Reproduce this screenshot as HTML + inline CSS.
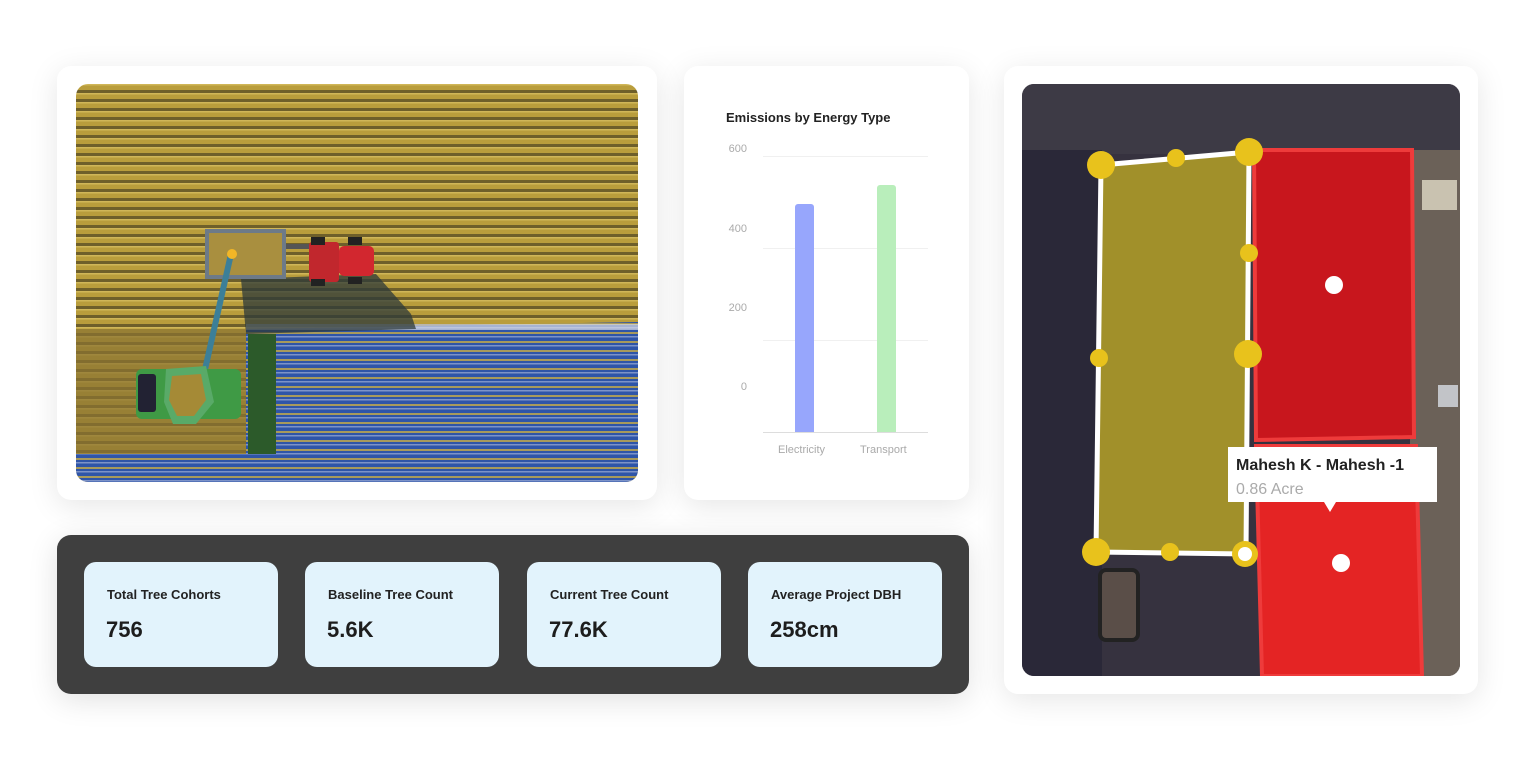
<!DOCTYPE html>
<html><head><meta charset="utf-8"><style>
html,body{margin:0;padding:0;background:#fff;width:1536px;height:766px;overflow:hidden;font-family:"Liberation Sans",sans-serif}
.card{position:absolute;background:#fff;border-radius:14px;box-shadow:0 6px 30px rgba(0,0,0,0.10)}
.stat{position:absolute;top:27px;width:194px;height:105px;background:#e2f3fc;border-radius:12px}
.stat .l{position:absolute;left:23px;top:25px;font-size:13px;font-weight:bold;color:#222}
.stat .v{position:absolute;left:22px;top:55px;font-size:22px;font-weight:bold;color:#1d1d1d}
.yl{position:absolute;font-size:11px;color:#aaa;width:40px;text-align:right;left:23px}
</style></head><body>

<div class="card" style="left:57px;top:66px;width:600px;height:434px"></div>
<svg style="position:absolute;left:76px;top:84px" width="562" height="398" viewBox="0 0 562 398">
<defs>
<clipPath id="c1"><rect width="562" height="398" rx="12"/></clipPath>
<pattern id="gold" width="562" height="9" patternUnits="userSpaceOnUse">
<rect width="562" height="9" fill="#b99d3c"/><rect y="6" width="562" height="3" fill="#6e5f2a"/><rect y="0" width="562" height="1.5" fill="#d0b658"/></pattern>
<pattern id="blue" width="562" height="9" patternUnits="userSpaceOnUse">
<rect width="562" height="9" fill="#2f55a8"/><rect y="5" width="562" height="2" fill="#a89a5c"/><rect y="0" width="562" height="1.5" fill="#7d93c8"/></pattern>
</defs>
<g clip-path="url(#c1)">
<rect width="562" height="398" fill="url(#gold)"/>
<polygon points="170,245 562,238 562,398 0,398 0,370 170,370" fill="url(#blue)"/>
<rect x="170" y="240" width="392" height="6" fill="#d8dce6" opacity="0.7"/>
<polygon points="165,195 300,190 335,230 340,245 170,250" fill="#2e3a3a" opacity="0.75"/>
<rect x="0" y="245" width="170" height="125" fill="#8a7332" opacity="0.7"/>
<rect x="129" y="145" width="81" height="50" fill="#6d7a88"/>
<rect x="133" y="149" width="73" height="42" fill="#a98f3f"/>
<rect x="210" y="160" width="24" height="5" fill="#555"/>
<rect x="233" y="158" width="30" height="40" fill="#c1272d" rx="3"/>
<rect x="263" y="162" width="35" height="30" fill="#d2272f" rx="5"/>
<rect x="235" y="153" width="14" height="8" fill="#222"/><rect x="272" y="153" width="14" height="8" fill="#222"/>
<rect x="235" y="195" width="14" height="7" fill="#222"/><rect x="272" y="193" width="14" height="7" fill="#222"/>
<line x1="128" y1="290" x2="155" y2="170" stroke="#3c7f98" stroke-width="6"/>
<circle cx="156" cy="170" r="5" fill="#f2b626"/>
<rect x="172" y="250" width="28" height="120" fill="#2c5a2a"/>
<rect x="60" y="285" width="105" height="50" fill="#3f9a45" rx="6"/>
<polygon points="90,285 130,282 138,318 120,340 97,340 88,318" fill="#59aa68"/>
<polygon points="96,292 125,290 130,316 118,332 101,332 93,316" fill="#a58a36"/>
<rect x="62" y="290" width="18" height="38" fill="#223" rx="3"/>
</g></svg>

<div class="card" style="left:684px;top:66px;width:285px;height:434px">
<div style="position:absolute;left:42px;top:44px;font-size:13px;font-weight:bold;color:#222">Emissions by Energy Type</div>
<div class="yl" style="top:77px">600</div>
<div class="yl" style="top:157px">400</div>
<div class="yl" style="top:236px">200</div>
<div class="yl" style="top:315px">0</div>
<div style="position:absolute;left:79px;top:90px;width:165px;height:1px;background:#f0f0f0"></div>
<div style="position:absolute;left:79px;top:182px;width:165px;height:1px;background:#f0f0f0"></div>
<div style="position:absolute;left:79px;top:274px;width:165px;height:1px;background:#f0f0f0"></div>
<div style="position:absolute;left:79px;top:366px;width:165px;height:1px;background:#ddd"></div>
<div style="position:absolute;left:111px;top:138px;width:19px;height:228px;background:#97a6fc;border-radius:3px 3px 0 0"></div>
<div style="position:absolute;left:193px;top:119px;width:19px;height:247px;background:#b9eebb;border-radius:3px 3px 0 0"></div>
<div style="position:absolute;left:94px;top:378px;font-size:11px;color:#aaa">Electricity</div>
<div style="position:absolute;left:176px;top:378px;font-size:11px;color:#aaa">Transport</div>
</div>

<div style="position:absolute;left:57px;top:535px;width:912px;height:159px;background:#3f3f3f;border-radius:14px;box-shadow:0 6px 30px rgba(0,0,0,0.12)">
<div class="stat" style="left:27px"><div class="l">Total Tree Cohorts</div><div class="v">756</div></div>
<div class="stat" style="left:248px"><div class="l">Baseline Tree Count</div><div class="v">5.6K</div></div>
<div class="stat" style="left:470px"><div class="l">Current Tree Count</div><div class="v">77.6K</div></div>
<div class="stat" style="left:691px"><div class="l">Average Project DBH</div><div class="v">258cm</div></div>
</div>

<div class="card" style="left:1004px;top:66px;width:474px;height:628px"></div>
<svg style="position:absolute;left:1022px;top:84px" width="438" height="592" viewBox="1022 84 438 592">
<defs><clipPath id="c2"><rect x="1022" y="84" width="438" height="592" rx="12"/></clipPath></defs>
<g clip-path="url(#c2)">
<rect x="1022" y="84" width="438" height="592" fill="#36323f"/>
<rect x="1022" y="84" width="438" height="70" fill="#3d3a45"/>
<rect x="1022" y="150" width="80" height="526" fill="#2a2838"/>
<rect x="1410" y="150" width="50" height="526" fill="#6b6158"/>
<rect x="1422" y="180" width="35" height="30" fill="#c9c2b0"/>
<rect x="1438" y="385" width="20" height="22" fill="#c2c4c8"/>
<rect x="1100" y="570" width="38" height="70" fill="#5a4e48" stroke="#222" stroke-width="4" rx="6"/>
<polygon points="1101,165 1249,152 1246,554 1096,552" fill="#a1902a" stroke="#fff" stroke-width="5"/>
<polygon points="1254,150 1412,150 1414,437 1256,440" fill="#c8161d" stroke="#ee3b3b" stroke-width="4"/>
<polygon points="1256,446 1416,446 1422,676 1262,676" fill="#e42424" stroke="#ee3b3b" stroke-width="4"/>
<g fill="#e8c21c">
<circle cx="1101" cy="165" r="14"/><circle cx="1176" cy="158" r="9"/><circle cx="1249" cy="152" r="14"/>
<circle cx="1249" cy="253" r="9"/><circle cx="1099" cy="358" r="9"/><circle cx="1248" cy="354" r="14"/>
<circle cx="1096" cy="552" r="14"/><circle cx="1170" cy="552" r="9"/><circle cx="1245" cy="554" r="13"/>
</g>
<circle cx="1245" cy="554" r="7" fill="#fff"/>
<circle cx="1334" cy="285" r="9" fill="#fff"/><circle cx="1341" cy="563" r="9" fill="#fff"/>
<rect x="1228" y="447" width="209" height="55" fill="#fff"/>
<polygon points="1324,502 1336,502 1330,512" fill="#fff"/>
<text x="1236" y="470" font-family="Liberation Sans" font-weight="bold" font-size="16" fill="#222">Mahesh K - Mahesh -1</text>
<text x="1236" y="494" font-family="Liberation Sans" font-size="16" fill="#aaa">0.86 Acre</text>
</g></svg>
</body></html>
